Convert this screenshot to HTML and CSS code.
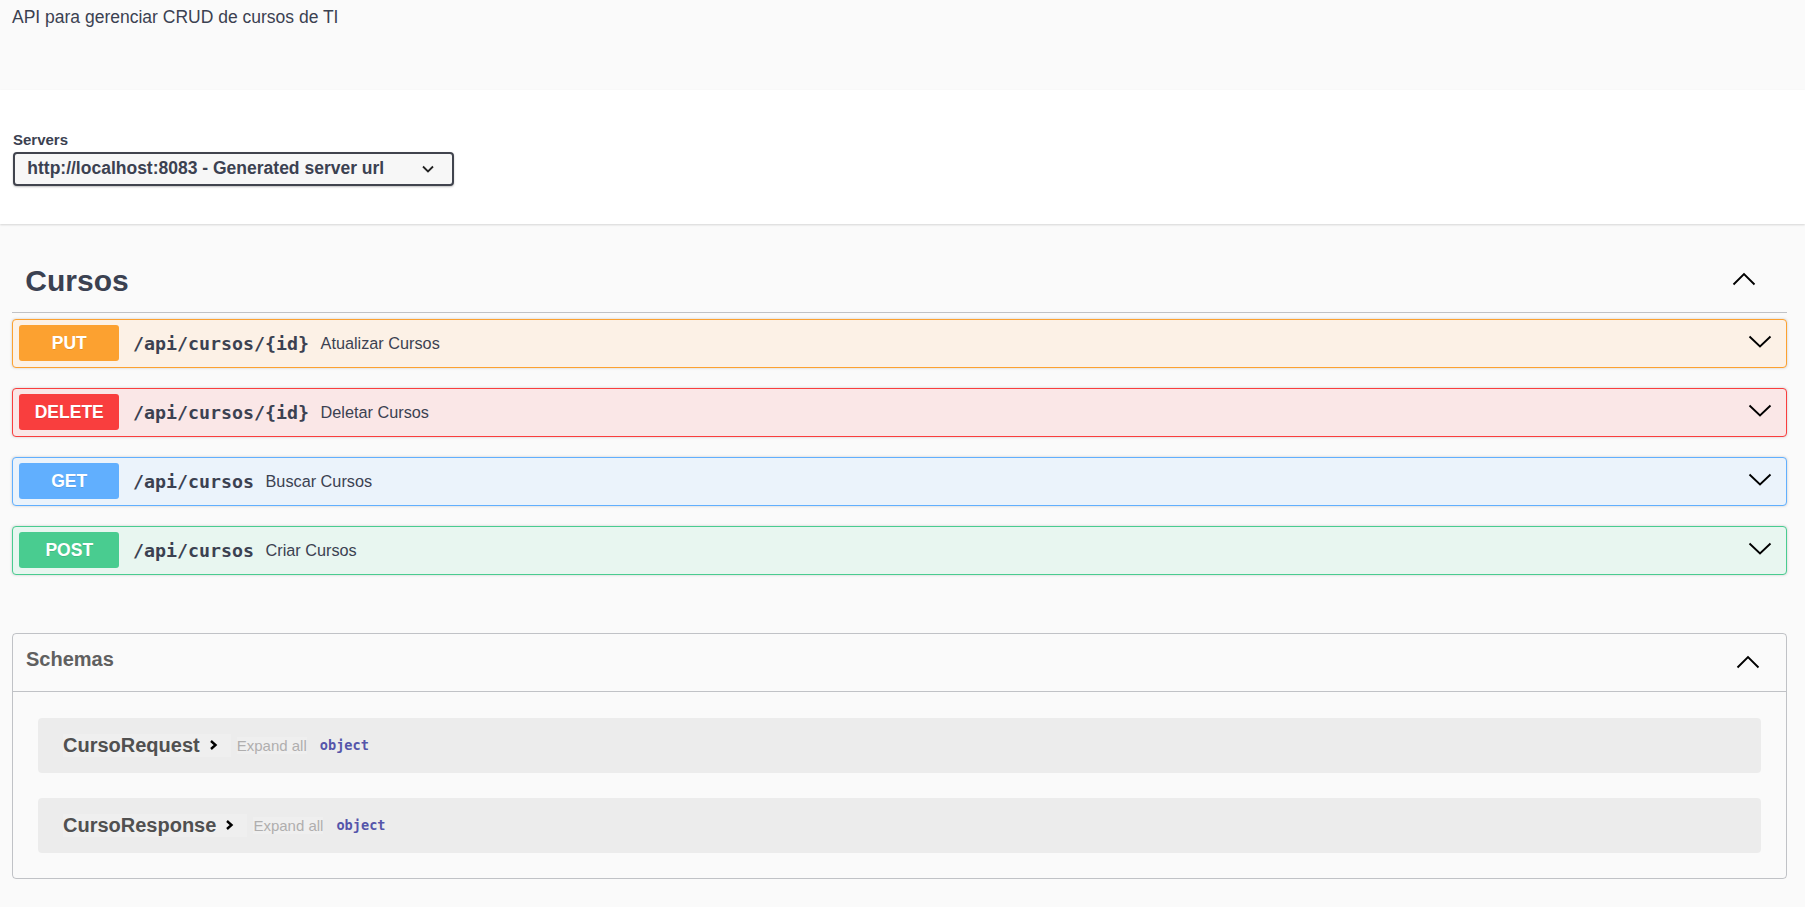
FILE: index.html
```html
<!DOCTYPE html>
<html lang="pt">
<head>
<meta charset="utf-8">
<title>Swagger UI</title>
<link rel="stylesheet" href="styles.css">
</head>
<body>
<div class="info">
  <p class="desc">API para gerenciar CRUD de cursos de TI</p>
</div>
<div class="scheme">
  <div class="wrap">
    <div class="servers-label">Servers</div>
    <div class="select">
      <span>http://localhost:8083 - Generated server url</span>
      <svg class="sel-arrow" width="12" height="8" viewBox="0 0 12 8"><polyline points="1,1.5 6,6.5 11,1.5" fill="none" stroke="#222" stroke-width="1.8"/></svg>
    </div>
  </div>
</div>
<div class="wrap main">
  <section class="tag">
    <h3 class="tag-head">
      <span>Cursos</span>
      <svg class="up" width="24" height="14" viewBox="0 0 24 14"><polyline points="1.5,12.5 12,2 22.5,12.5" fill="none" stroke="#000" stroke-width="1.9"/></svg>
    </h3>
    <div class="op put">
      <span class="method">PUT</span>
      <span class="path">/api/cursos/{id}</span>
      <span class="summary">Atualizar Cursos</span>
      <svg class="down" width="24" height="13" viewBox="0 0 24 13"><polyline points="1.5,1.5 12,11.5 22.5,1.5" fill="none" stroke="#000" stroke-width="1.9"/></svg>
    </div>
    <div class="op delete">
      <span class="method">DELETE</span>
      <span class="path">/api/cursos/{id}</span>
      <span class="summary">Deletar Cursos</span>
      <svg class="down" width="24" height="13" viewBox="0 0 24 13"><polyline points="1.5,1.5 12,11.5 22.5,1.5" fill="none" stroke="#000" stroke-width="1.9"/></svg>
    </div>
    <div class="op get">
      <span class="method">GET</span>
      <span class="path">/api/cursos</span>
      <span class="summary">Buscar Cursos</span>
      <svg class="down" width="24" height="13" viewBox="0 0 24 13"><polyline points="1.5,1.5 12,11.5 22.5,1.5" fill="none" stroke="#000" stroke-width="1.9"/></svg>
    </div>
    <div class="op post">
      <span class="method">POST</span>
      <span class="path">/api/cursos</span>
      <span class="summary">Criar Cursos</span>
      <svg class="down" width="24" height="13" viewBox="0 0 24 13"><polyline points="1.5,1.5 12,11.5 22.5,1.5" fill="none" stroke="#000" stroke-width="1.9"/></svg>
    </div>
  </section>
  <section class="models">
    <div class="models-head">
      <span>Schemas</span>
      <svg class="up" width="24" height="14" viewBox="0 0 24 14"><polyline points="1.5,12.5 12,2 22.5,12.5" fill="none" stroke="#000" stroke-width="1.9"/></svg>
    </div>
    <div class="models-list">
      <div class="model">
        <span class="model-btn">
          <span class="model-title">CursoRequest</span>
          <svg class="toggle" width="9" height="12" viewBox="0 0 9 12"><polyline points="2,2 6.5,6 2,10" fill="none" stroke="#000" stroke-width="2.4"/></svg>
        </span>
        <span class="expand">Expand all</span>
        <span class="type">object</span>
      </div>
      <div class="model">
        <span class="model-btn">
          <span class="model-title">CursoResponse</span>
          <svg class="toggle" width="9" height="12" viewBox="0 0 9 12"><polyline points="2,2 6.5,6 2,10" fill="none" stroke="#000" stroke-width="2.4"/></svg>
        </span>
        <span class="expand">Expand all</span>
        <span class="type">object</span>
      </div>
    </div>
  </section>
</div>
</body>
</html>
```
FILE: styles.css
```css
* { box-sizing: border-box; }

body {
  margin: 0;
  background: #fafafa;
  font-family: "Liberation Sans", Arial, sans-serif;
  color: #3b4151;
}

.wrap {
  padding: 0 18px 0 12px;
}

.info {
  height: 90px;
  padding: 7px 0 0 12px;
}

.desc {
  margin: 0;
  font-size: 17.5px;
  line-height: 20px;
  color: #3b4151;
}

.scheme {
  height: 134px;
  padding-top: 41px;
  background: #fff;
  box-shadow: 0 1px 2px 0 rgba(0, 0, 0, 0.15);
}

.servers-label {
  font-size: 15px;
  font-weight: bold;
  line-height: 17px;
  padding-left: 1px;
}

.select {
  margin-top: 3.7px;
  width: 441px;
  height: 34px;
  margin-left: 0.7px;
  border: 2px solid #41444e;
  border-radius: 4px;
  background: #f7f7f7;
  box-shadow: 0 1px 2px 0 rgba(0, 0, 0, 0.25);
  display: flex;
  align-items: center;
  justify-content: space-between;
  padding: 0 18px 0 12.6px;
  font-size: 17.5px;
  font-weight: bold;
  color: #3b4151;
}

.main {
  padding-top: 36.5px;
  padding-bottom: 28px;
}

.tag-head {
  margin: 0;
  display: flex;
  align-items: center;
  justify-content: space-between;
  height: 52px;
  padding: 0 31px 11px 13.3px;
  border-bottom: 1px solid rgba(59, 65, 81, 0.3);
  font-size: 30px;
  line-height: 40px;
  font-weight: bold;
  color: #3b4151;
}

.tag-head .up {
  margin-bottom: 3px;
}

.op {
  display: flex;
  align-items: center;
  height: 49px;
  padding: 0 6.25px;
  border: 1px solid;
  border-radius: 4px;
  box-shadow: 0 0 3px rgba(0, 0, 0, 0.19);
  margin-bottom: 20px;
}

.op:last-child {
  margin-bottom: 0;
}

.tag-head + .op {
  margin-top: 6.3px;
}

.method {
  width: 100px;
  height: 36px;
  flex: none;
  border-radius: 3px;
  display: flex;
  align-items: center;
  justify-content: center;
  color: #fff;
  font-size: 17.5px;
  font-weight: bold;
  text-shadow: 0 1px 0 rgba(0, 0, 0, 0.1);
}

.path {
  margin-left: 13.7px;
  font-family: "DejaVu Sans Mono", "Liberation Mono", monospace;
  font-size: 18.3px;
  font-weight: bold;
  color: #3b4151;
}

.summary {
  margin-left: 11.5px;
  font-size: 16.25px;
  color: #3b4151;
}

.op .down {
  margin-left: auto;
  margin-right: 7.5px;
  margin-bottom: 3px;
}

.put { background: #fcf1e6; border-color: #fca130; }
.put .method { background: #fca130; }
.delete { background: #fae7e7; border-color: #f93e3e; }
.delete .method { background: #f93e3e; }
.get { background: #ebf3fb; border-color: #61affe; }
.get .method { background: #61affe; }
.post { background: #e8f6f0; border-color: #49cc90; }
.post .method { background: #49cc90; }

.models {
  margin-top: 58px;
  border: 1px solid rgba(59, 65, 81, 0.3);
  border-radius: 4px;
}

.models-head {
  height: 58px;
  display: flex;
  align-items: center;
  justify-content: space-between;
  padding: 0 26px 5px 13px;
  border-bottom: 1px solid rgba(59, 65, 81, 0.3);
  font-size: 20px;
  font-weight: bold;
  color: #606060;
}

.models-head .up {
  margin-top: 4px;
}

.models-list {
  padding: 26px 25px 25.5px;
  display: flex;
  flex-direction: column;
  gap: 25px;
}

.model {
  height: 55px;
  display: flex;
  align-items: center;
  padding: 0 25px;
  border-radius: 4px;
  background: rgba(0, 0, 0, 0.055);
}

.model-btn {
  display: flex;
  align-items: center;
  padding-right: 13px;
  background: rgba(255, 255, 255, 0.18);
}

.model-title {
  font-size: 20px;
  font-weight: bold;
  color: #505050;
}

.toggle {
  margin-left: 9px;
}

.expand {
  margin-left: 6px;
  font-size: 15px;
  color: #afaeae;
  background: rgba(255, 255, 255, 0.18);
}

.type {
  margin-left: 13px;
  font-family: "DejaVu Sans Mono", "Liberation Mono", monospace;
  font-size: 13.6px;
  font-weight: bold;
  color: #55a;
}
```
